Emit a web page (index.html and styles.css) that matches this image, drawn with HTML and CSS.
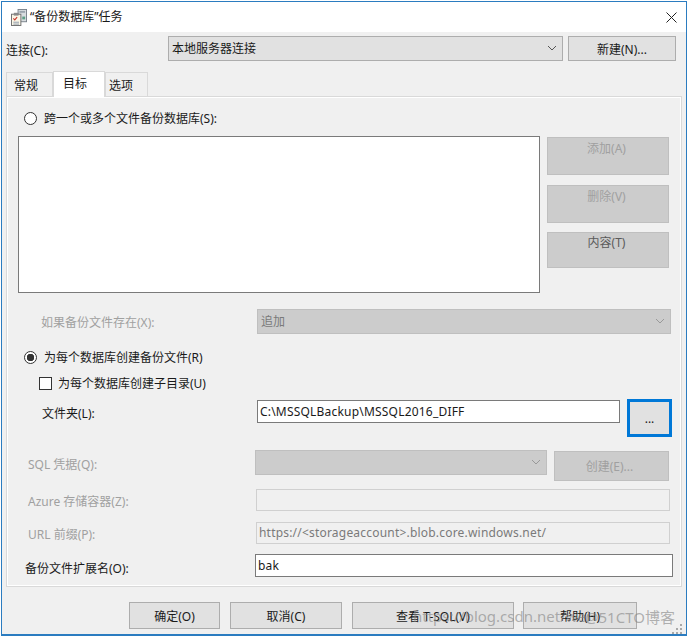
FILE: index.html
```html
<!DOCTYPE html>
<html lang="zh-CN">
<head>
    <meta charset="UTF-8">
    <title>“备份数据库”任务</title>
    <link rel="stylesheet" href="styles.css">
</head>
<body>
    <div class="dialog">
        <header class="title-bar">
            <svg class="title-icon" width="16" height="17" viewBox="1 1 17 18">
                <rect x="8.5" y="1.5" width="9" height="13" fill="#d8dde0" stroke="#77808a"/>
                <rect x="10" y="3" width="6" height="2" fill="#9aa4ad"/>
                <rect x="13" y="9" width="3" height="3" fill="#5e9e86"/>
                <rect x="1.5" y="6.5" width="10" height="12" fill="#fbf6e6" stroke="#6d6d6d"/>
                <rect x="4" y="5" width="5" height="3" fill="#8a8a8a"/>
                <path d="M3.5 11l1.5 1.500 2.500-3" fill="none" stroke="#c8382e" stroke-width="1.200"/>
                <path d="M3.500 15h6M3.500 17h6" stroke="#8a97a8"/>
            </svg>
            <span class="title-text">“备份数据库”任务</span>
            <svg class="close-icon" width="11" height="11" viewBox="0 0 11 11">
                <path d="M.5 .5l10 10M10.500 .5l-10 10" stroke="#222" fill="none"/>
            </svg>
        </header>

        <div class="dialog-body">
            <div class="connect-row">
                <label class="connect-label">连接(C):</label>
                <div class="select connect-select">
                    <span>本地服务器连接</span>
                    <svg class="chevron" width="10" height="6" viewBox="0 0 10 6"><path d="M1 1l4 4 4-4" fill="none" stroke="#555"/></svg>
                </div>
                <button class="btn new-btn">新建(N)...</button>
            </div>

            <nav class="tabs">
                <span class="tab tab-first">常规</span>
                <span class="tab tab-active">目标</span>
                <span class="tab tab-last">选项</span>
            </nav>

            <section class="panel">
                <div class="option-row first-option">
                    <span class="radio"></span>
                    <span>跨一个或多个文件备份数据库(S):</span>
                </div>

                <div class="files-row">
                    <div class="listbox"></div>
                    <div class="side-btns">
                        <button class="btn btn-off side-add">添加(A)</button>
                        <button class="btn btn-off side-del">删除(V)</button>
                        <button class="btn btn-off side-info">内容(T)</button>
                    </div>
                </div>

                <div class="exists-row">
                    <label class="off-text">如果备份文件存在(X):</label>
                    <div class="select select-off exists-select">
                        <span>追加</span>
                        <svg class="chevron" width="10" height="6" viewBox="0 0 10 6"><path d="M1 1l4 4 4-4" fill="none" stroke="#999"/></svg>
                    </div>
                </div>

                <div class="option-row second-option">
                    <span class="radio radio-on"></span>
                    <span>为每个数据库创建备份文件(R)</span>
                </div>

                <div class="check-row">
                    <span class="checkbox"></span>
                    <span>为每个数据库创建子目录(U)</span>
                </div>

                <div class="folder-row">
                    <label>文件夹(L):</label>
                    <div class="input folder-input">C:\MSSQLBackup\MSSQL2016_DIFF</div>
                    <button class="btn btn-focus">...</button>
                </div>

                <div class="cred-row">
                    <label class="off-text">SQL 凭据(Q):</label>
                    <div class="select select-off cred-select">
                        <svg class="chevron" width="10" height="6" viewBox="0 0 10 6"><path d="M1 1l4 4 4-4" fill="none" stroke="#999"/></svg>
                    </div>
                    <button class="btn btn-off create-btn">创建(E)...</button>
                </div>

                <div class="azure-row">
                    <label class="off-text">Azure 存储容器(Z):</label>
                    <div class="input input-off"></div>
                </div>

                <div class="url-row">
                    <label class="off-text">URL 前缀(P):</label>
                    <div class="input input-off url-input">https://&lt;storageaccount&gt;.blob.core.windows.net/</div>
                </div>

                <div class="ext-row">
                    <label>备份文件扩展名(O):</label>
                    <div class="input ext-input">bak</div>
                </div>
            </section>

            <footer class="actions">
                <button class="btn ok-btn">确定(O)</button>
                <button class="btn cancel-btn">取消(C)</button>
                <button class="btn sql-btn">查看 T-SQL(V)</button>
                <button class="btn help-btn">帮助(H)</button>
            </footer>
        </div>

        <span class="watermark">https://blog.csdn.net/wei<span class="mark-end">@51CTO博客</span></span>
        <svg class="grip" width="12" height="12" viewBox="0 0 12 12">
            <path d="M8 2h2v2H8zM4 6h2v2H4zM8 6h2v2H8zM0 10h2v2H0zM4 10h2v2H4zM8 10h2v2H8z" fill="#a8a8a8"/>
        </svg>
    </div>
</body>
</html>
```

FILE: styles.css
```css
* {
    margin: 0;
    padding: 0;
    box-sizing: border-box;
}

body {
    font-family: "Noto Sans", "Noto Sans CJK SC", sans-serif;
    font-size: 12px;
    color: #1a1a1a;
    background: #fff;
    width: 687px;
    height: 636px;
    padding: 1px 0 0 1px;
    overflow: hidden;
}

.dialog {
    position: relative;
    width: 686px;
    height: 635px;
    background: #f0f0f0;
    border: 1px solid #2b7cc0;
    border-bottom-width: 2px;
}

.title-bar {
    height: 30px;
    background: #fff;
    display: flex;
    align-items: center;
    padding: 0 9px 0 9px;
}

.title-text {
    margin: 0 0 2px 3px;
    font-size: 12px;
    flex: 1;
}

.dialog-body {
    padding: 4px 0 0 4px;
}

.connect-row {
    display: flex;
    align-items: center;
    height: 25px;
}

.connect-label {
    width: 162px;
    padding: 3px 0 0 0;
}

.select {
    height: 25px;
    display: flex;
    align-items: center;
    justify-content: space-between;
    padding: 0 5px 1px 3px;
    background: #e1e1e1;
    border: 1px solid #adadad;
}

.connect-select {
    width: 395px;
}

.new-btn {
    width: 108px;
    height: 25px;
    margin-left: 5px;
}

.btn {
    font: inherit;
    color: #1a1a1a;
    background: #e1e1e1;
    border: 1px solid #adadad;
}

.btn-off {
    color: #a0a0a0;
    background: #ccc;
    border-color: #bfbfbf;
}

.select-off {
    color: #7a7a7a;
    background: #ccc;
    border-color: #bfbfbf;
}

.off-text {
    color: #a0a0a0;
}

.chevron {
    margin-left: auto;
}

.tabs {
    display: flex;
    height: 25px;
    margin-top: 10px;
    align-items: flex-end;
}

.tab {
    height: 24px;
    background: #f0f0f0;
    border: 1px solid #d9d9d9;
    border-bottom: 0;
    padding-top: 3px;
    text-align: center;
}

.tab-first {
    width: 47px;
    padding-right: 7px;
}

.tab-active {
    width: 52px;
    height: 26px;
    margin-bottom: -1px;
    background: #fff;
    padding: 2px 8px 0 0;
    position: relative;
    z-index: 1;
}

.tab-last {
    width: 43px;
    padding-right: 11px;
}

.panel {
    width: 676px;
    height: 491px;
    border: 2px solid #fff;
    outline: 1px solid #d9d9d9;
    outline-offset: -1px;
    padding: 0 0 0 10px;
}

.option-row,
.check-row {
    display: flex;
    align-items: center;
}

.option-row {
    gap: 7px;
}

.check-row {
    gap: 6px;
}

.first-option {
    height: 18px;
    margin-top: 11px;
    padding-left: 6px;
}

.radio {
    width: 13px;
    height: 13px;
    border: 1px solid #333;
    border-radius: 50%;
    background: #fff;
    flex-shrink: 0;
}

.radio-on {
    background: radial-gradient(circle, #333 0, #333 3.5px, #fff 4px);
}

.files-row {
    display: flex;
    gap: 7px;
    margin-top: 9px;
}

.listbox {
    width: 522px;
    height: 157px;
    background: #fff;
    border: 1px solid #7a7a7a;
}

.side-btns {
    display: flex;
    flex-direction: column;
    width: 122px;
    padding-top: 1px;
}

.side-add,
.side-del {
    height: 38px;
    padding: 0 3px 17px 0;
}

.side-del {
    margin-top: 10px;
}

.side-info {
    height: 36px;
    margin-top: 9px;
    color: #5a5a5a;
    padding: 0 3px 16px 0;
}

.exists-row {
    display: flex;
    align-items: center;
    margin-top: 16px;
    padding-left: 23px;
}

.exists-row label {
    width: 216px;
}

.exists-select {
    width: 414px;
}

.second-option {
    height: 18px;
    margin-top: 14px;
    padding-left: 6px;
}

.check-row {
    height: 18px;
    margin-top: 8px;
    padding-left: 21px;
}

.checkbox {
    width: 13px;
    height: 13px;
    background: #fff;
    border: 1px solid #333;
}

.folder-row {
    display: flex;
    margin-top: 8px;
    padding-left: 24px;
}

.folder-row label {
    width: 215px;
    padding-top: 4px;
}

.input {
    height: 23px;
    display: flex;
    align-items: center;
    padding: 0 3px 1px 2px;
    background: #fff;
    border: 1px solid #7a7a7a;
    letter-spacing: 0.2px;
}

.folder-input {
    width: 363px;
}

.btn-focus {
    width: 45px;
    height: 38px;
    margin: -1px 0 0 7px;
    border: 3px solid #0078d7;
}

.cred-row {
    display: flex;
    margin-top: 13px;
    padding-left: 10px;
}

.cred-row label {
    width: 227px;
    padding-top: 5px;
}

.cred-select {
    width: 292px;
}

.create-btn {
    width: 115px;
    height: 30px;
    margin: 1px 0 0 7px;
    padding-right: 4px;
}

.azure-row,
.url-row {
    display: flex;
    height: 22px;
    padding-left: 10px;
}

.azure-row {
    margin-top: 8px;
}

.url-row {
    margin-top: 11px;
}

.azure-row label,
.url-row label {
    width: 228px;
    padding-top: 3px;
}

.input-off {
    width: 414px;
    height: 22px;
    color: #7a7a7a;
    background: #f0f0f0;
    border-color: #d0d0d0;
}

.ext-row {
    display: flex;
    margin-top: 10px;
    padding-left: 7px;
}

.ext-row label {
    width: 230px;
    padding-top: 5px;
}

.ext-input {
    width: 418px;
}

.actions {
    display: flex;
    margin-top: 15px;
    padding-left: 123px;
}

.actions .btn {
    height: 27px;
}

.ok-btn {
    width: 91px;
}

.cancel-btn {
    width: 112px;
    margin-left: 10px;
}

.sql-btn {
    width: 162px;
    margin-left: 10px;
}

.help-btn {
    width: 114px;
    margin-left: 9px;
}

.watermark {
    position: absolute;
    left: 411px;
    top: 604px;
    font-size: 15px;
    color: rgba(130, 130, 130, 0.6);
    white-space: nowrap;
}

.mark-end {
    position: absolute;
    left: 172px;
    top: 0;
}

.close-icon {
    flex-shrink: 0;
}

.grip {
    position: absolute;
    right: 2px;
    bottom: 0;
}
```
